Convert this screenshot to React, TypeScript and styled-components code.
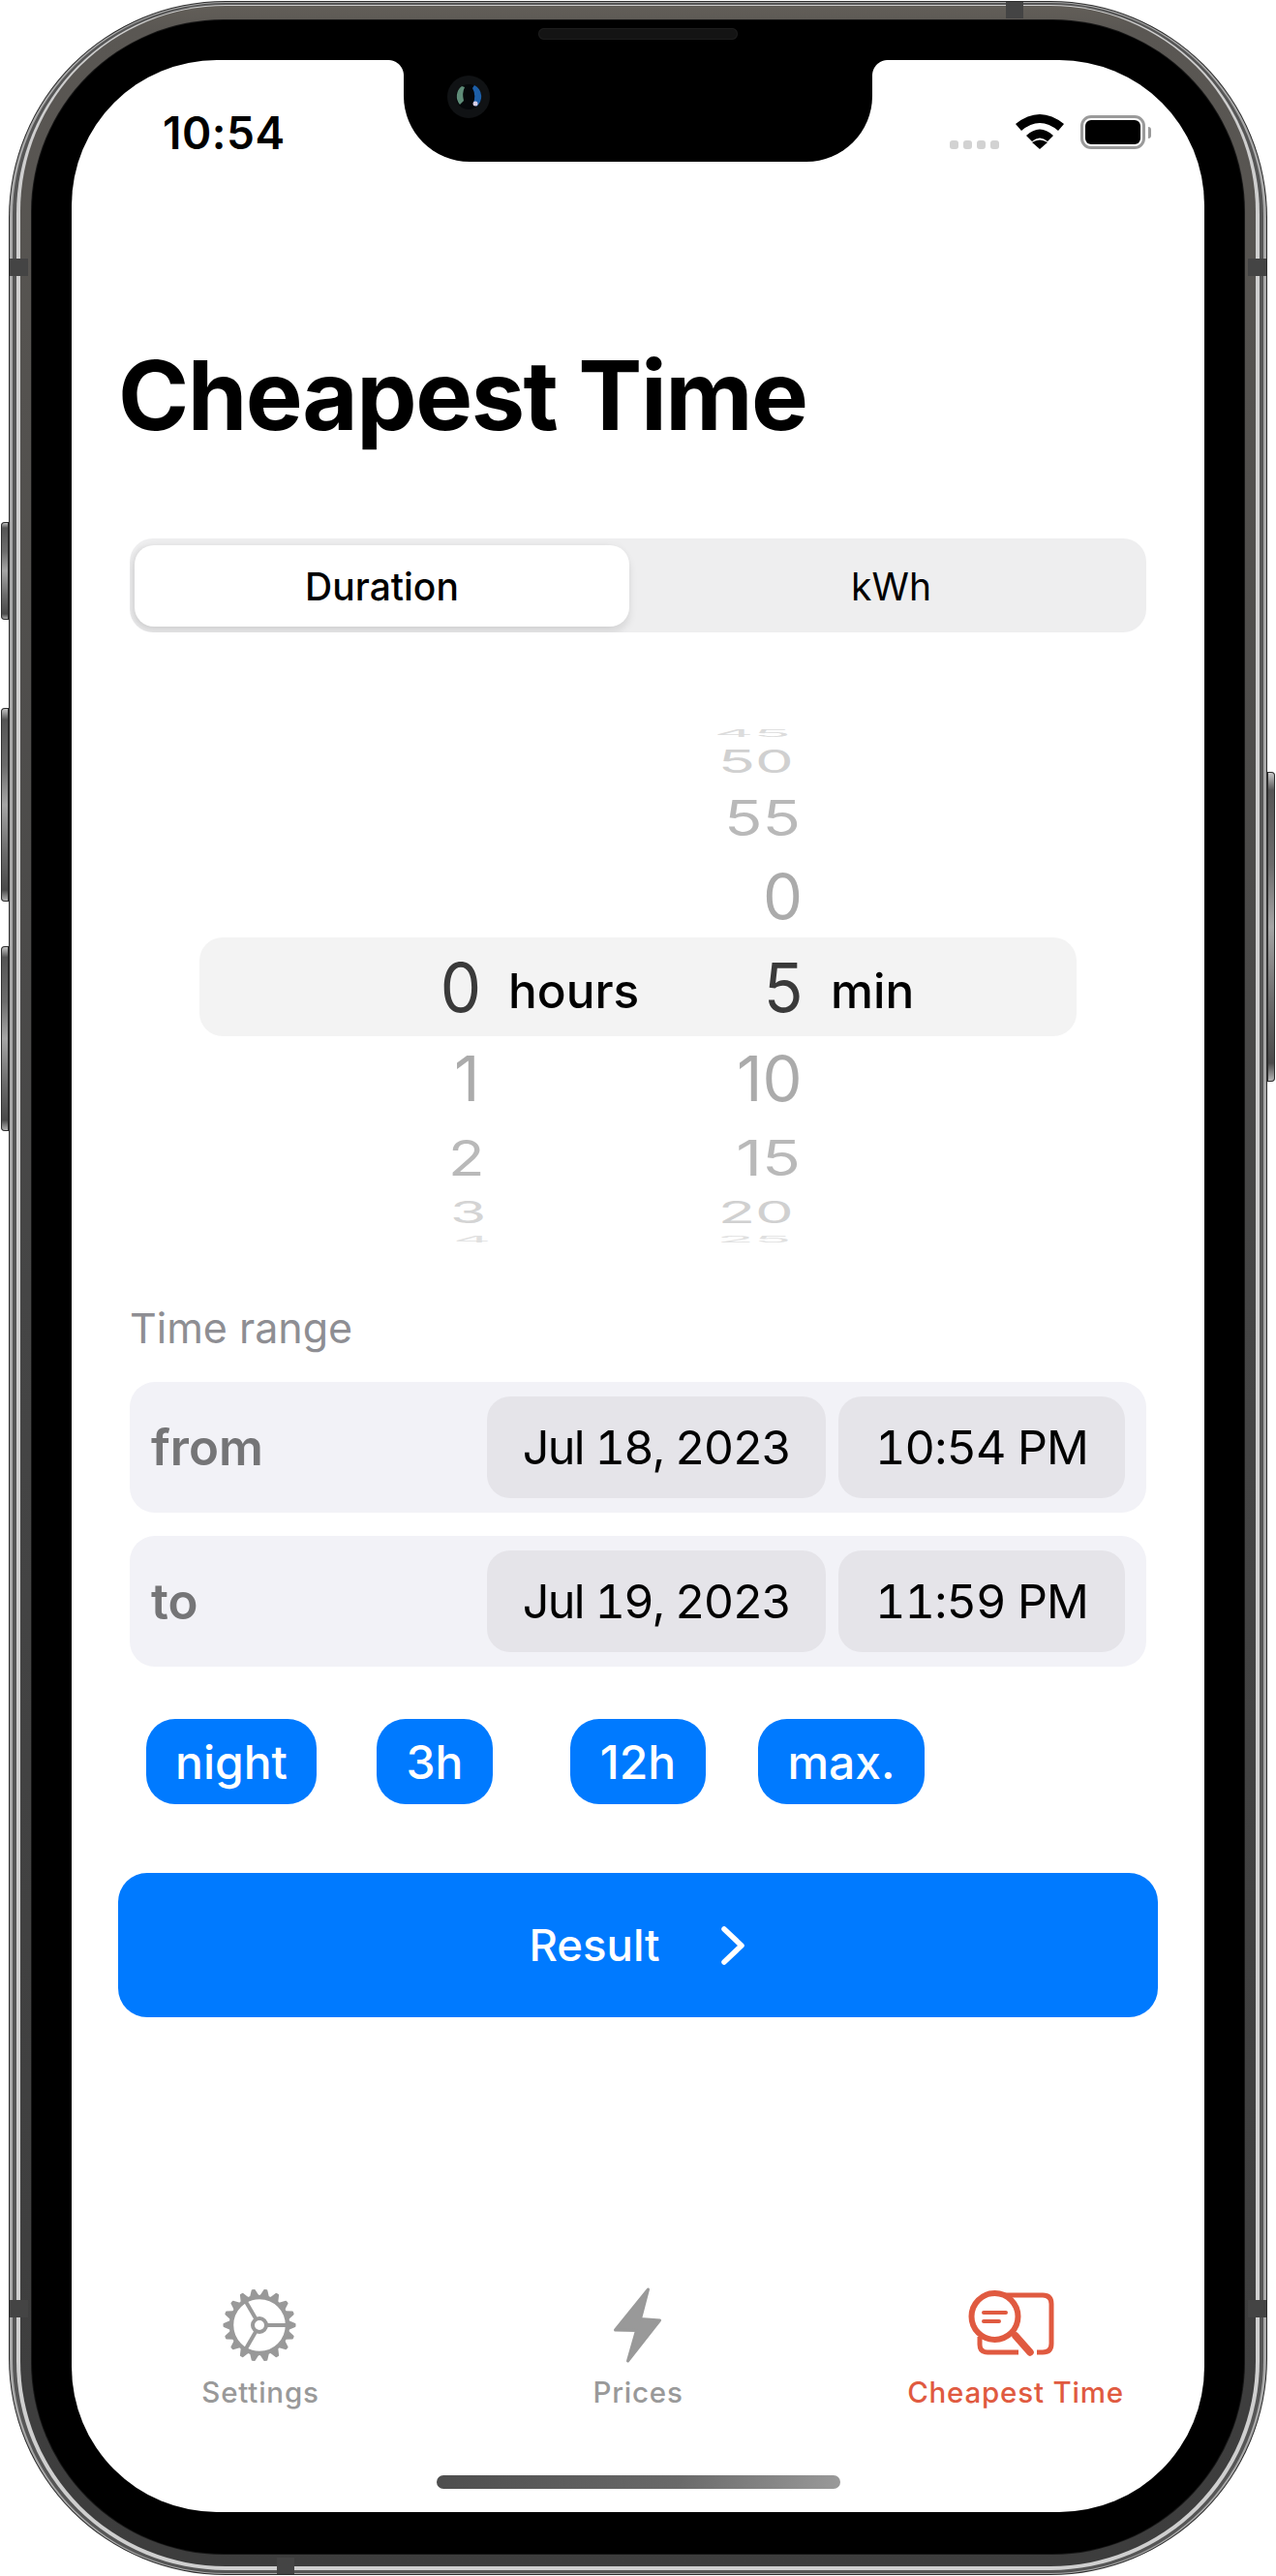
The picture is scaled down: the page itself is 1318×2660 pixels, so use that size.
import React from 'react';
import styled, { createGlobalStyle } from 'styled-components';

const Global = createGlobalStyle`
  html, body { margin: 0; padding: 0; background: #fff; }
  body { font-family: Inter, "Liberation Sans", sans-serif; }
`;

const Page = styled.div`
  width: 1318px;
  height: 2660px;
  display: flex;
  align-items: flex-start;
  padding-top: 1px;
  box-sizing: border-box;
  overflow: hidden;
`;

const Rail = styled.div<{ $w: number; $top: number }>`
  width: ${p => p.$w}px;
  flex: none;
  display: flex;
  flex-direction: column;
  align-items: stretch;
  padding-top: ${p => p.$top}px;
`;

const SideKey = styled.div<{ $h: number; $mt?: number; $side: 'left' | 'right' }>`
  height: ${p => p.$h}px;
  margin-top: ${p => p.$mt ?? 0}px;
  margin-${p => (p.$side === 'left' ? 'left' : 'right')}: 1px;
  border-radius: ${p => (p.$side === 'left' ? '4px 0 0 4px' : '0 4px 4px 0')};
  background: linear-gradient(180deg, #cfcfcf 0%, #555 6%, #6c6c6c 30%, #a5a5a5 50%, #6a6a6a 75%, #4a4a4a 94%, #bbb 100%);
  box-shadow: inset 0 0 0 1px #2e2e2e;
`;

const Shell = styled.div`
  position: relative;
  flex: none;
  width: 1300px;
  height: 2658px;
  box-sizing: border-box;
  border-radius: 224px;
  padding: 1px;
  background: #2b2b2b;
`;

const EdgeBand = styled.div`
  height: 100%;
  box-sizing: border-box;
  border-radius: 223px;
  padding: 1px 3px 1px 3px;
  background: #a8a8a8;
`;

const MetalBand = styled.div`
  height: 100%;
  box-sizing: border-box;
  border-radius: 220px;
  padding: 2px 4px 3px 4px;
  background: #565656;
`;

const GlintBand = styled.div`
  height: 100%;
  box-sizing: border-box;
  border-radius: 216px;
  padding: 1px 4px 4px 4px;
  background: #cfcfcf;
`;

const InnerBand = styled.div`
  height: 100%;
  box-sizing: border-box;
  border-radius: 212px;
  padding: 15px 12px 13px 12px;
  background: linear-gradient(180deg, #625e58 0%, #5a5753 1%, #454545 50%, #3d3d3d 100%);
`;

const Face = styled.div`
  position: relative;
  height: 100%;
  box-sizing: border-box;
  border-radius: 198px;
  padding: 41px 41px 43px 41px;
  background: #000;
  box-shadow: 0 0 0 1px #161616;
`;

const Antenna = styled.div<{ $x?: number; $y?: number; $right?: boolean; $bottom?: boolean }>`
  position: absolute;
  background: #444;
  ${p =>
    p.$y !== undefined
      ? `top: ${p.$y}px; ${p.$right ? 'right' : 'left'}: 1px; width: 19px; height: 18px;`
      : `left: ${p.$x}px; ${p.$bottom ? 'bottom' : 'top'}: 1px; height: 17px; width: 18px;`}
`;

const Speaker = styled.div`
  position: absolute;
  left: 523px;
  top: 8px;
  width: 206px;
  height: 12px;
  border-radius: 6px;
  background: #141414;
  box-shadow: inset 0 0 0 1px #1d1d1d;
`;

const Screen = styled.div`
  position: relative;
  height: 100%;
  display: flex;
  flex-direction: column;
  background: #fff;
  border-radius: 150px;
  overflow: hidden;
`;

const Notch = styled.div`
  position: absolute;
  left: 343px;
  top: 0;
  width: 484px;
  height: 105px;
  background: #000;
  border-radius: 0 0 68px 68px;
  &::before, &::after {
    content: '';
    position: absolute;
    top: 0;
    width: 16px;
    height: 16px;
  }
  &::before { left: -16px; background: radial-gradient(circle at 0 100%, #fff 15.5px, #000 16.5px); }
  &::after { right: -16px; background: radial-gradient(circle at 100% 100%, #fff 15.5px, #000 16.5px); }
`;

const Camera = styled.svg`
  position: absolute;
  left: 45px;
  top: 16px;
  width: 44px;
  height: 44px;
`;

const StatusBar = styled.div`
  height: 110px;
  flex: none;
  display: flex;
  justify-content: space-between;
  align-items: flex-start;
  padding: 47px 61px 0 94px;
  box-sizing: border-box;
`;

const Clock = styled.div`
  font-size: 46px;
  font-weight: 600;
  line-height: 56px;
  color: #000;
  letter-spacing: 0.5px;
`;

const StatusIcons = styled.div`
  display: flex;
  align-items: flex-end;
  margin-top: 9px;
  height: 36px;
`;

const SignalDots = styled.div`
  display: flex;
  gap: 5px;
  margin-right: 17px;
`;

const SignalDot = styled.div`
  width: 9px;
  height: 9px;
  border-radius: 3px;
  background: #d2d2d2;
`;

const Battery = styled.div`
  position: relative;
  margin-left: 17px;
  width: 67px;
  height: 35px;
  padding: 2px;
  box-sizing: border-box;
  border: 3px solid #9a9a9a;
  border-radius: 11px;
  &::after {
    content: '';
    position: absolute;
    right: -9px;
    top: 9px;
    width: 3px;
    height: 12px;
    border-radius: 0 6px 6px 0;
    background: #9a9a9a;
  }
`;

const BatteryFill = styled.div`
  height: 100%;
  border-radius: 6px;
  background: #000;
`;

const Title = styled.h1`
  margin: 176px 0 0 48px;
  font-size: 99px;
  line-height: 120px;
  font-weight: 700;
  color: #000;
  letter-spacing: -1.5px;
`;

const Segmented = styled.div`
  margin: 88px 60px 0;
  height: 97px;
  box-sizing: border-box;
  padding: 7px 9px 6px 5px;
  display: grid;
  grid-template-columns: 511px 1fr;
  background: #eeeeef;
  border-radius: 24px;
  overflow: hidden;
`;

const Segment = styled.div<{ $active?: boolean }>`
  display: flex;
  align-items: center;
  justify-content: center;
  padding-left: ${p => (p.$active ? 0 : 16)}px;
  font-size: 39px;
  font-weight: ${p => (p.$active ? 500 : 400)};
  color: #000;
  border-radius: 20px;
  background: ${p => (p.$active ? '#fff' : 'transparent')};
  box-shadow: ${p => (p.$active ? '0 6px 8px rgba(0,0,0,0.1), -5px 0 4px rgba(0,0,0,0.04), 0 -4px 4px rgba(0,0,0,0.015)' : 'none')};
`;

const Picker = styled.div`
  position: relative;
  margin-top: 92px;
  height: 549px;
  display: grid;
  grid-template-columns: 247px 174px 331px 1fr;
`;

const PickerBand = styled.div`
  position: absolute;
  left: 132px;
  width: 906px;
  top: 223px;
  height: 102px;
  border-radius: 24px;
  background: #f3f3f3;
`;

const Wheel = styled.div<{ $col: number }>`
  position: relative;
  display: flex;
  flex-direction: column;
  align-items: flex-end;
  grid-column: ${p => p.$col};
`;

const WheelSlot = styled.div<{ $h: number; $sx: number; $sy: number; $dx: number; $c: string }>`
  height: ${p => p.$h}px;
  display: flex;
  align-items: center;
  justify-content: flex-end;
  color: ${p => p.$c};
  font-size: 70px;
  font-weight: 400;
  line-height: 70px;
  white-space: nowrap;
  transform-origin: right center;
  transform: translateX(${p => p.$dx}px) scale(${p => p.$sx}, ${p => p.$sy});
`;

const UnitLabel = styled.div<{ $left: number }>`
  position: absolute;
  left: ${p => p.$left}px;
  top: 223px;
  height: 102px;
  padding-top: 8px;
  box-sizing: border-box;
  display: flex;
  align-items: center;
  font-size: 49.5px;
  font-weight: 500;
  color: #000;
`;

const SectionLabel = styled.div`
  margin: 52px 0 0 60px;
  font-size: 43px;
  line-height: 50px;
  color: #8e8e93;
`;

const DateRow = styled.div<{ $mt: number }>`
  margin: ${p => p.$mt}px 60px 0;
  height: 135px;
  box-sizing: border-box;
  padding: 15px 22px;
  display: flex;
  gap: 13px;
  background: #f2f2f7;
  border-radius: 26px;
`;

const RowLabel = styled.div`
  flex: 1;
  display: flex;
  align-items: center;
  font-size: 51px;
  font-weight: 600;
  color: #757577;
`;

const DatePill = styled.div<{ $w: number; $ls: number }>`
  width: ${p => p.$w}px;
  display: flex;
  align-items: center;
  justify-content: center;
  font-size: 48.5px;
  letter-spacing: ${p => p.$ls}px;
  font-feature-settings: 'tnum' 1;
  color: #000;
  border-radius: 24px;
  background: #e5e4e9;
`;

const QuickRow = styled.div`
  margin: 54px 60px 0;
  display: grid;
  grid-template-columns: repeat(4, 210px);
  justify-items: center;
`;

const QuickButton = styled.div<{ $px?: number }>`
  height: 88px;
  box-sizing: border-box;
  padding: 0 ${p => p.$px ?? 30}px;
  display: flex;
  align-items: center;
  font-size: 48px;
  font-weight: 500;
  color: #fff;
  background: #007aff;
  border-radius: 30px;
`;

const ResultButton = styled.div`
  margin: 71px 48px 0;
  height: 149px;
  display: flex;
  align-items: center;
  justify-content: center;
  gap: 60px;
  font-size: 45.5px;
  font-weight: 500;
  color: #fff;
  background: #007aff;
  border-radius: 30px;
`;

const TabBar = styled.div`
  margin-top: auto;
  display: grid;
  grid-template-columns: repeat(3, 1fr);
`;

const Tab = styled.div<{ $active?: boolean }>`
  display: flex;
  flex-direction: column;
  align-items: center;
  gap: 11px;
  font-size: 29.5px;
  line-height: 36px;
  font-weight: 500;
  letter-spacing: 0.8px;
  color: ${p => (p.$active ? '#e05a40' : '#999999')};
`;

const TabIcon = styled.svg`
  display: block;
  width: 100px;
  height: 80px;
`;

const HomeIndicator = styled.div`
  margin: 68px auto 24px;
  width: 417px;
  height: 14px;
  border-radius: 7px;
  background: linear-gradient(100deg, #4e4e4e 0%, #6a6a6a 60%, #9a9a9a 100%);
  flex: none;
`;

const teeth = Array.from({ length: 18 }, (_, i) => i * 20);

const Gear = () => (
  <TabIcon viewBox="-49 -40 100 80">
    <g fill="#999" stroke="#999" strokeLinejoin="round">
      {teeth.map(a => (
        <polygon key={a} points="30,-3.8 36.5,-1 36.5,1 30,3.8" strokeWidth="2" transform={`rotate(${a})`} />
      ))}
    </g>
    <circle r="29" fill="none" stroke="#999" strokeWidth="4.5" />
    <g stroke="#999" strokeWidth="4">
      <line x1="8" y1="0" x2="29" y2="0" />
      <line x1="-4" y1="7" x2="-15" y2="26" />
      <line x1="-4" y1="-7" x2="-15" y2="-26" />
    </g>
    <circle r="7" fill="#fff" stroke="#999" strokeWidth="4" />
  </TabIcon>
);

const Bolt = () => (
  <TabIcon viewBox="8.5 0 100 80">
    <polygon
      points="69,3 35,45 57,45.5 48,77 81,35 61,33.5"
      fill="#999"
      stroke="#999"
      strokeWidth="3"
      strokeLinejoin="round"
    />
  </TabIcon>
);

const SearchBook = () => (
  <TabIcon viewBox="39 24 100 80">
    <g fill="none" stroke="#e05a40" strokeLinecap="round">
      <path d="M78 33H117Q126 33 126 42V83Q126 92 117 92H111" strokeWidth="5" strokeLinecap="butt" />
      <path d="M52 76V84Q52 92 60 92H92" strokeWidth="5" strokeLinecap="butt" />
      <circle cx="67.5" cy="55" r="24" strokeWidth="6" />
      <path d="M56 51H79M56 60H72" strokeWidth="4" />
      <path d="M89 75L104 92" strokeWidth="7.5" />
    </g>
  </TabIcon>
);

type Row = { t: string; h: number; sx: number; sy: number; dx: number; c: string };

const minutes: Row[] = [
  { t: '45', h: 25, sx: 0.9, sy: 0.14, dx: -9, c: '#dcdcdc' },
  { t: '50', h: 32, sx: 0.9, sy: 0.47, dx: -6, c: '#d0d0d0' },
  { t: '55', h: 85, sx: 0.93, sy: 0.72, dx: 1, c: '#b9b9b9' },
  { t: '0', h: 77, sx: 0.93, sy: 0.92, dx: 3, c: '#ababab' },
  { t: '5', h: 111, sx: 0.96, sy: 1, dx: 4, c: '#3a3a3a' },
  { t: '10', h: 78, sx: 0.93, sy: 0.92, dx: 3, c: '#ababab' },
  { t: '15', h: 85, sx: 0.94, sy: 0.72, dx: 1, c: '#b9b9b9' },
  { t: '20', h: 28, sx: 0.9, sy: 0.44, dx: -6, c: '#d0d0d0' },
  { t: '25', h: 28, sx: 0.9, sy: 0.12, dx: -9, c: '#e0e0e0' },
];

const hours: Row[] = [
  { t: '', h: 219, sx: 1, sy: 1, dx: 0, c: '#fff' },
  { t: '0', h: 111, sx: 0.96, sy: 1, dx: 2, c: '#3a3a3a' },
  { t: '1', h: 78, sx: 0.93, sy: 0.92, dx: 0, c: '#ababab' },
  { t: '2', h: 85, sx: 0.88, sy: 0.72, dx: 6, c: '#b9b9b9' },
  { t: '3', h: 28, sx: 0.86, sy: 0.44, dx: 7, c: '#d4d4d4' },
  { t: '4', h: 28, sx: 0.86, sy: 0.12, dx: 12, c: '#e0e0e0' },
];

const renderWheel = (rows: Row[]) =>
  rows.map((r, i) => (
    <WheelSlot key={i} $h={r.h} $sx={r.sx} $sy={r.sy} $dx={r.dx} $c={r.c}>
      {r.t}
    </WheelSlot>
  ));

export default function App() {
  return (
    <>
      <Global />
      <Page>
        <Rail $w={9} $top={538}>
          <SideKey $side="left" $h={101} />
          <SideKey $side="left" $h={200} $mt={91} />
          <SideKey $side="left" $h={191} $mt={46} />
        </Rail>
        <Shell>
          <EdgeBand>
            <MetalBand>
              <GlintBand>
                <InnerBand>
                  <Face>
                    <Speaker />
                    <Screen>
                      <StatusBar>
                        <Clock>10:54</Clock>
                        <StatusIcons>
                          <SignalDots>
                            <SignalDot />
                            <SignalDot />
                            <SignalDot />
                            <SignalDot />
                          </SignalDots>
                          <svg width="50" height="36" viewBox="0 0 50 36">
                            <path d="M0 10Q25-10 50 10L44 17Q25 1 6 17Z" fill="#000" />
                            <path d="M11 22Q25 9 39 22L33 28Q25 21 17 28Z" fill="#000" />
                            <path d="M25 36L17 29Q25 24 33 29Z" fill="#000" />
                          </svg>
                          <Battery>
                            <BatteryFill />
                          </Battery>
                        </StatusIcons>
                      </StatusBar>
                      <Title>Cheapest Time</Title>
                      <Segmented>
                        <Segment $active>Duration</Segment>
                        <Segment>kWh</Segment>
                      </Segmented>
                      <Picker>
                        <PickerBand />
                        <Wheel $col={2}>{renderWheel(hours)}</Wheel>
                        <Wheel $col={3}>{renderWheel(minutes)}</Wheel>
                        <UnitLabel $left={451}>hours</UnitLabel>
                        <UnitLabel $left={784}>min</UnitLabel>
                      </Picker>
                      <SectionLabel>Time range</SectionLabel>
                      <DateRow $mt={31}>
                        <RowLabel>from</RowLabel>
                        <DatePill $w={350} $ls={-1.6}>Jul 18, 2023</DatePill>
                        <DatePill $w={296} $ls={-0.8}>10:54 PM</DatePill>
                      </DateRow>
                      <DateRow $mt={24}>
                        <RowLabel>to</RowLabel>
                        <DatePill $w={350} $ls={-1.6}>Jul 19, 2023</DatePill>
                        <DatePill $w={296} $ls={-0.8}>11:59 PM</DatePill>
                      </DateRow>
                      <QuickRow>
                        <QuickButton>night</QuickButton>
                        <QuickButton $px={31}>3h</QuickButton>
                        <QuickButton $px={31}>12h</QuickButton>
                        <QuickButton>max.</QuickButton>
                      </QuickRow>
                      <ResultButton>
                        Result
                        <svg width="30" height="42" viewBox="0 0 30 42">
                          <path d="M6 4L24 21L6 38" fill="none" stroke="#fff" strokeWidth="5.5" strokeLinecap="round" strokeLinejoin="round" />
                        </svg>
                      </ResultButton>
                      <TabBar>
                        <Tab>
                          <Gear />
                          Settings
                        </Tab>
                        <Tab>
                          <Bolt />
                          Prices
                        </Tab>
                        <Tab $active>
                          <SearchBook />
                          Cheapest Time
                        </Tab>
                      </TabBar>
                      <HomeIndicator />
                      <Notch>
                        <Camera viewBox="0 0 44 44">
                          <circle cx="22" cy="22" r="22" fill="#101214" />
                          <circle cx="22" cy="22" r="13" fill="#05070a" />
                          <path d="M28 10A13 13 0 0 1 30 32L27 28Q30 20 26 13Z" fill="#1d5fa8" />
                          <path d="M15 11A13 13 0 0 0 13 30L17 26Q15 18 18 12Z" fill="#5f8c78" />
                          <circle cx="29" cy="29" r="2.5" fill="#d9cfe6" />
                        </Camera>
                      </Notch>
                    </Screen>
                  </Face>
                </InnerBand>
              </GlintBand>
            </MetalBand>
          </EdgeBand>
          <Antenna $y={266} />
          <Antenna $y={266} $right />
          <Antenna $y={2374} />
          <Antenna $y={2374} $right />
          <Antenna $x={1030} />
          <Antenna $x={277} $bottom />
        </Shell>
        <Rail $w={9} $top={796}>
          <SideKey $side="right" $h={320} />
        </Rail>
      </Page>
    </>
  );
}
